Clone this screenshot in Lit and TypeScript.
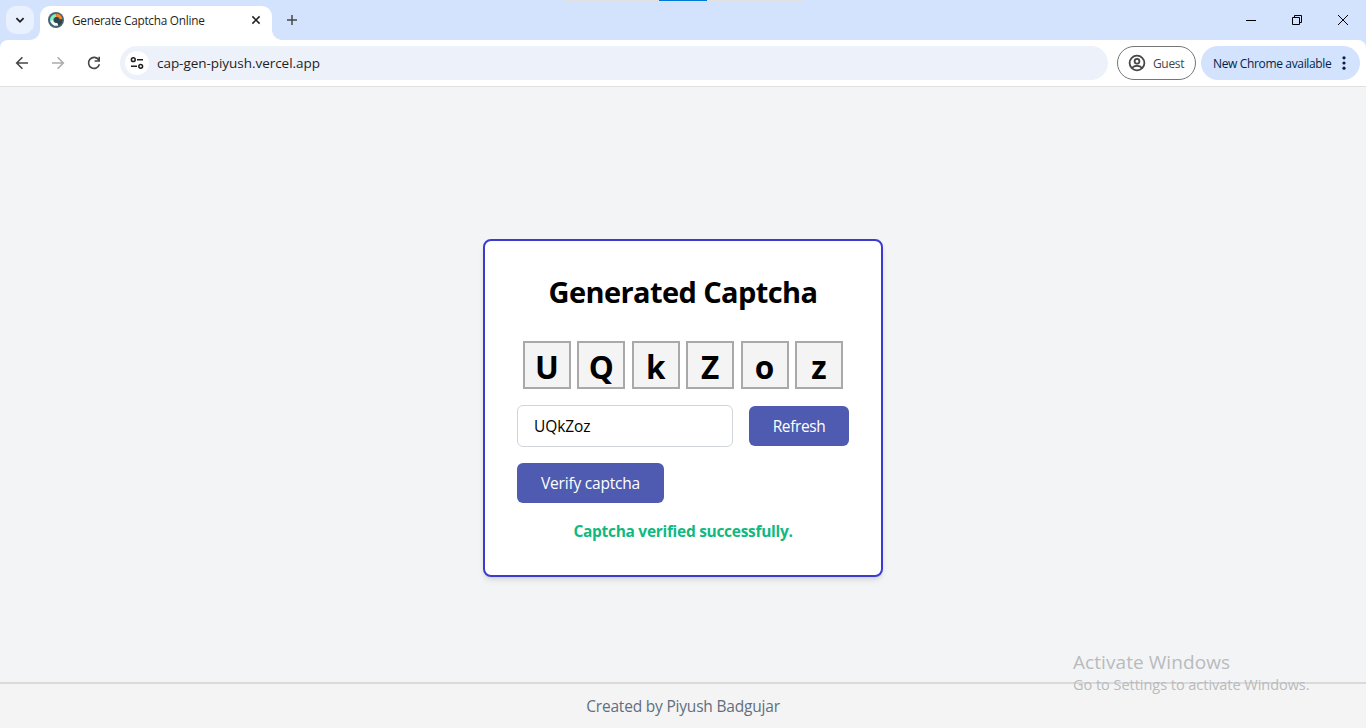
import { LitElement, html, css } from "lit";
import { customElement, state } from "lit/decorators.js";

@customElement("browser-chrome")
class BrowserChrome extends LitElement {
  static styles = css`
    :host { display: block; font-family: "Open Sans", "Segoe UI", sans-serif; font-size: 12px; color: #1f1f1f; background: #d3e3fd; white-space: nowrap; }
    svg { display: block; flex: none; }
    .strip { position: relative; height: 40px; display: flex; }
    .edge { position: absolute; top: 0; left: 563px; width: 241px; height: 1px; background: #e1e1e1; }
    .edge i { display: block; width: 48px; height: 1px; margin-left: 96px; background: #0078d7; }
    .search { width: 28px; height: 28px; margin: 6px 6px 0; border-radius: 10px; background: #e9f0fe; }
    .tab { position: relative; width: 232px; height: 34px; margin-top: 6px; box-sizing: border-box; padding: 0 9px 6px 8px; border-radius: 10px 10px 0 0; background: #fff; display: flex; align-items: center; }
    .flare { position: absolute; bottom: 0; width: 10px; height: 10px; }
    .flare.l { left: -10px; background: radial-gradient(circle at 0 0, #d3e3fd 9.5px, #fff 10.2px); }
    .flare.r { right: -10px; background: radial-gradient(circle at 100% 0, #d3e3fd 9.5px, #fff 10.2px); }
    .title { flex: 1; margin-left: 8px; font-size: 11.8px; letter-spacing: -0.26px; }
    .plus { margin: 12px 0 0 12px; }
    .win { margin-left: auto; display: flex; }
    .bar { height: 46px; box-sizing: border-box; padding: 0 6px 0 14px; background: #fff; border-radius: 8px 8px 0 0; display: flex; align-items: center; }
    .bar > svg + svg { margin-left: 20px; }
    .omni { flex: 1; height: 34px; margin: 0 9px 0 18px; border-radius: 17px; background: #ecf1fa; display: flex; align-items: center; }
    .site { width: 24px; height: 24px; margin: 0 8px 0 5px; border-radius: 50%; background: #fff; }
    .url { font-size: 13.5px; letter-spacing: -0.04px; }
    .guest { height: 34px; width: 79px; box-sizing: border-box; border: 1px solid #747775; border-radius: 17px; display: flex; align-items: center; padding-left: 10px; color: #474747; }
    .guest span { margin-left: 7px; letter-spacing: -0.35px; }
    .update { height: 34px; width: 159px; box-sizing: border-box; margin-left: 5px; padding: 0 8px 0 12px; border-radius: 17px; background: #d3e3fd; color: #041e49; display: flex; align-items: center; justify-content: space-between; }
    .update span { letter-spacing: -0.35px; }
    .line { height: 1px; background: #dfe1e3; }
  `;

  render() {
    return html`
      <div class="strip">
        <div class="edge"><i></i></div>
        <div class="search"><svg width="28" height="28" fill="none" stroke="#1f1f1f" stroke-width="1.8"><path d="M10.4 12.2l3.6 3.6 3.6-3.6"/></svg></div>
        <div class="tab">
          <span class="flare l"></span><span class="flare r"></span>
          <svg width="16" height="16" viewBox="0 0 16 16" fill="none">
            <circle cx="8" cy="8" r="8" fill="#486671"/>
            <path d="M13.800 6.500A6 6 0 0 1 8 14.300L7 11l2-3z" fill="#2f444b"/>
            <path d="M8 3.600A4.400 4.400 0 0 0 3.900 9.500" stroke="#7eefc4" stroke-width="3.400"/>
            <path d="M3.700 8.500A4.500 4.500 0 0 0 9.800 12.100" stroke="#f4fffa" stroke-width="2.800"/>
            <path d="M8.200 3.600A4.600 4.600 0 0 1 12.500 7.600" stroke="#ff8a24" stroke-width="3.600"/>
            <circle cx="8.800" cy="7.800" r="2.900" fill="#2f444b"/>
            <path d="M9 7.500h5.500l-1 3.500-2.500 1.200-2-1.700z" fill="#2f444b"/>
          </svg>
          <span class="title">Generate Captcha Online</span>
          <svg width="14" height="14" stroke="#1f1f1f" stroke-width="1.5"><path d="M3.4 3.4l7.2 7.2M10.6 3.4l-7.2 7.2"/></svg>
        </div>
        <svg class="plus" width="16" height="16" stroke="#474747" stroke-width="1.5"><path d="M8 3v10M3 8h10"/></svg>
        <svg class="win" width="138" height="40" fill="none" stroke="#000" stroke-width="1">
          <path d="M18 20.5h10"/>
          <path d="M64.5 17.5h7v7h-7zM66.500 17.500v-2h7v7h-2"/>
          <path d="M110 15l10 10M120 15l-10 10"/>
        </svg>
      </div>
      <div class="bar">
        <svg width="16" height="16" fill="none" stroke="#474747" stroke-width="1.6"><path d="M14 8H3M8.400 2.300L2.700 8l5.700 5.700"/></svg>
        <svg width="16" height="16" fill="none" stroke="#aaacae" stroke-width="1.6"><path d="M2 8h11M7.600 2.300L13.300 8l-5.700 5.700"/></svg>
        <svg width="16" height="16" fill="none" stroke="#474747" stroke-width="1.600"><path d="M12.700 4.900A5.500 5.500 0 1 0 13.400 9.300M13.200 1.800v4.200H8.600"/></svg>
        <div class="omni">
          <div class="site"><svg width="24" height="24" fill="none" stroke="#1f1f1f" stroke-width="1.5"><circle cx="8.300" cy="8.700" r="1.900"/><path d="M12 8.700h6M6 15.300h6"/><circle cx="15.700" cy="15.300" r="1.900"/></svg></div>
          <span class="url">cap-gen-piyush.vercel.app</span>
        </div>
        <div class="guest">
          <svg width="18" height="18" fill="none" stroke="#474747" stroke-width="1.800"><circle cx="9" cy="9" r="7.400"/><circle cx="9" cy="7.200" r="2.400"/><path d="M3.800 14c2.800-3 7.600-3 10.400 0"/></svg>
          <span>Guest</span>
        </div>
        <div class="update">
          <span>New Chrome available</span>
          <svg width="16" height="16" fill="#041e49"><circle cx="8" cy="2.800" r="1.600"/><circle cx="8" cy="8" r="1.600"/><circle cx="8" cy="13.200" r="1.600"/></svg>
        </div>
      </div>
      <div class="line"></div>
    `;
  }
}

@customElement("captcha-card")
class CaptchaCard extends LitElement {
  static styles = css`
    :host { display: block; width: 400px; height: 338px; box-sizing: border-box; padding: 32px; border: 2px solid #3b3bd1; border-radius: 8px; background: #fff; box-shadow: 0 4px 6px -1px rgba(0,0,0,.1), 0 2px 4px -2px rgba(0,0,0,.1); white-space: nowrap; }
    h1 { margin: 0 0 30px; font-size: 29px; line-height: 38px; font-weight: 700; text-align: center; letter-spacing: -0.6px; color: #000; }
    .chars { display: flex; justify-content: center; gap: 6.4px; }
    .char { width: 48px; height: 48px; box-sizing: border-box; border: 2px solid #a9a9a9; background: #f4f4f4; font-size: 31.500px; line-height: 48px; font-weight: 700; text-align: center; }
    .row { display: flex; align-items: center; gap: 16px; margin: 16px 0; }
    input { width: 216px; height: 42px; box-sizing: border-box; margin: 0; padding: 0 16px; border: 1px solid #d1d5db; border-radius: 6px; background: #fff; outline: 0; font: 15.5px/24px "Open Sans", sans-serif; color: #000; letter-spacing: -0.1px; }
    button { display: block; height: 40px; padding: 0; border: 0; border-radius: 6px; background: #4e5bb0; color: #fff; font: 15.5px/24px "Open Sans", sans-serif; letter-spacing: -0.2px; }
    .refresh { width: 100px; letter-spacing: -0.4px; }
    .verify { width: 147px; }
    p { margin: 16px 0 0; font-size: 15.500px; line-height: 24px; font-weight: 700; text-align: center; color: #10b981; letter-spacing: -0.3px; }
  `;

  @state() private code = "UQkZoz";

  render() {
    return html`
      <h1>Generated Captcha</h1>
      <div class="chars">${[...this.code].map((c) => html`<div class="char">${c}</div>`)}</div>
      <div class="row">
        <input type="text" .value=${this.code} />
        <button class="refresh">Refresh</button>
      </div>
      <button class="verify">Verify captcha</button>
      <p>Captcha verified successfully.</p>
    `;
  }
}

@customElement("app-root")
class AppRoot extends LitElement {
  static styles = css`
    :host { position: relative; display: flex; flex-direction: column; width: 1366px; height: 728px; overflow: hidden; background: #f3f4f6; font-family: "Open Sans", "Segoe UI", sans-serif; }
    main { flex: 1; display: flex; justify-content: center; padding-top: 152px; box-sizing: border-box; }
    footer { height: 46px; box-sizing: border-box; border-top: 2px solid #d9dadc; background: #f4f4f4; color: #5f6f80; text-align: center; font-size: 15.5px; line-height: 44px; letter-spacing: -0.2px; }
    .activate { position: absolute; left: 1073px; top: 649px; color: #b9bbbd; white-space: nowrap; }
    .big { font-size: 19px; line-height: 26px; letter-spacing: 0.07px; }
    .small { font-size: 14.500px; line-height: 20px; letter-spacing: -0.03px; }
  `;

  render() {
    return html`
      <browser-chrome></browser-chrome>
      <main><captcha-card></captcha-card></main>
      <footer>Created by Piyush Badgujar</footer>
      <div class="activate">
        <div class="big">Activate Windows</div>
        <div class="small">Go to Settings to activate Windows.</div>
      </div>
    `;
  }
}
